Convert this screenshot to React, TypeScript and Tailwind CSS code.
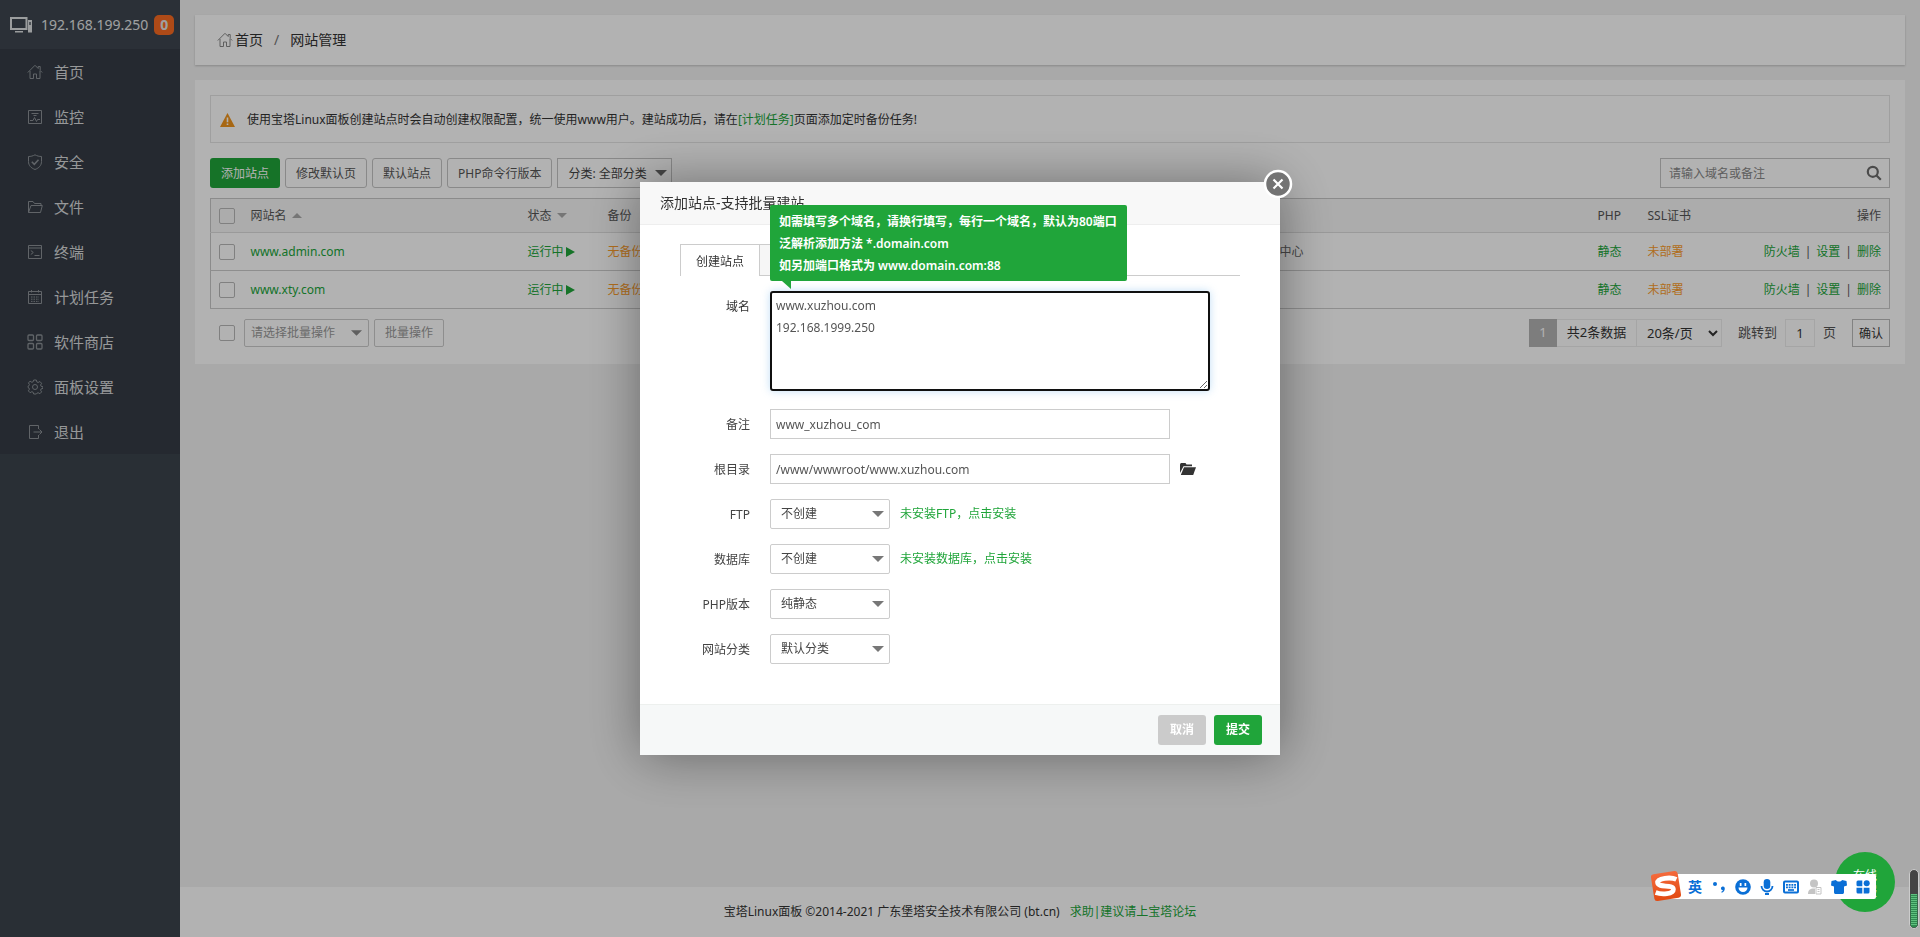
import React from 'react';

const MENU = [
  { label: '首页', icon: 'home' },
  { label: '监控', icon: 'monitor' },
  { label: '安全', icon: 'shield' },
  { label: '文件', icon: 'folder' },
  { label: '终端', icon: 'terminal' },
  { label: '计划任务', icon: 'calendar' },
  { label: '软件商店', icon: 'apps' },
  { label: '面板设置', icon: 'gear' },
  { label: '退出', icon: 'exit' },
];

const SITES = [
  { name: 'www.admin.com', note: '中心' },
  { name: 'www.xty.com', note: '' },
];

const ICON_PATHS: Record<string, React.ReactNode> = {
  home: <path d="M.8 8.500 8 1.300l3.200 3.200V2.500h2v4l2 2M3 7v7.500h3.500V10h3v4.500H13V7" />,
  monitor: (
    <>
      <path d="M1.500 1.500h13v13h-13z" />
      <path d="M4.500 4.500h7M6.500 6.500h3M3 11.500h3l1.500-3 2 4 1-2H13" />
    </>
  ),
  shield: (
    <>
      <path d="M8 .8c2 1.200 4.300 1.700 6.500 1.700v5c0 4-2.500 6.500-6.500 8-4-1.500-6.500-4-6.500-8v-5C3.700 2.500 6 2 8 .8z" />
      <path d="m4.800 7.800 2.500 2.500 4.200-4.500" strokeWidth={1.5} />
    </>
  ),
  folder: <path d="M1.500 13.500v-11h4.500l1.500 2h6.500v2M1.500 13.500 4 6.500h11.300L13.500 13.500z" />,
  terminal: (
    <>
      <path d="M1.500 1.500h13v13h-13zM1.500 4h13" />
      <path d="m3.800 6.500 2.500 2-2.500 2M7.500 11.500h5" />
    </>
  ),
  calendar: (
    <>
      <path d="M1.500 2.500h13v12h-13zM1.500 5.500h13M4.500 1v2.500M11.500 1v2.500" />
      <path d="M4 8h8M4 10.200h8M4 12.400h8" strokeDasharray="1.500 1" />
    </>
  ),
  apps: (
    <g strokeWidth={1.3}>
      <rect x="1" y="1" width="5.500" height="5.500" rx="1" />
      <rect x="9.500" y="1" width="5.500" height="5.500" rx="1" />
      <rect x="1" y="9.500" width="5.500" height="5.500" rx="1" />
      <rect x="9.500" y="9.500" width="5.500" height="5.500" rx="1" />
    </g>
  ),
  gear: (
    <>
      <circle cx="8" cy="8" r="2.500" />
      <path d="M6.700 1h2.600l.5 1.900 1.300.6 1.800-1 1.700 1.800-1 1.700.5 1.300 1.900.5v1.600l-1.900.5-.5 1.300 1 1.700-1.700 1.800-1.800-1-1.300.6L9.300 15H6.700l-.5-1.700-1.300-.6-1.800 1-1.700-1.800 1-1.700-.5-1.300L1 8.400V7.300l.9-.5.5-1.300-1-1.700 1.700-1.500 1.800 1 1.300-.6z" strokeLinejoin="round" />
    </>
  ),
  exit: <path d="M11.500 5V1.500h-9v13h9V11M6.500 8h8M12.500 5.500 15 8l-2.500 2.500" />,
};

const Icon = ({ name, className }: { name: string; className?: string }) => (
  <svg className={className} viewBox="0 0 16 16" fill="none" stroke="currentColor" strokeWidth={1}>
    {ICON_PATHS[name]}
  </svg>
);

const Caret = ({ className = '' }: { className?: string }) => (
  <svg className={className} viewBox="0 0 12 6" fill="currentColor">
    <path d="M0 0h12L6 6z" />
  </svg>
);

const Checkbox = ({ label }: { label: string }) => (
  <input
    type="checkbox"
    aria-label={label}
    className="block size-4 shrink-0 appearance-none rounded-xs border border-[#b8b8b8]"
  />
);

const Sidebar = () => (
  <aside className="w-[180px] shrink-0 bg-[#3c444d]">
    <div className="flex h-[49px] items-center bg-[#3e464f] pl-2.5 text-sm text-[#e4e6e8]">
      <svg className="mr-2 h-4 w-[23px]" viewBox="0 0 23 16" fill="none">
        <path d="M1 1h15.500v11H1z" stroke="#dfe1e3" strokeWidth="2" />
        <path d="M5 14h8v1.500H5zM18 3h4v12.500h-4z" fill="#dfe1e3" />
        <path d="M19 5h2v3h-2z" fill="#737a82" />
      </svg>
      <span>192.168.199.250</span>
      <span className="ml-1.5 flex h-5 w-5 items-center justify-center rounded-[5px] bg-[#fa6b22] font-bold">0</span>
    </div>
    <nav className="bg-[#353c45]">
      {MENU.map((item) => (
        <a key={item.label} href="#" className="flex h-[45px] items-center pl-[27px] text-[15px] text-[#d8dadc]">
          <Icon name={item.icon} className="mr-[11px] size-4 text-[#8b9096]" />
          {item.label}
        </a>
      ))}
    </nav>
  </aside>
);

const Toolbar = () => (
  <div className="mt-[15px] flex items-center gap-[5px]">
    <button className="h-[30px] rounded-[3px] bg-[#20a53a] px-[11px] pt-px text-white">添加站点</button>
    <button className="h-[30px] rounded-[3px] border border-[#c4c4c4] px-2.5 pt-px text-[#555]">修改默认页</button>
    <button className="h-[30px] rounded-[3px] border border-[#c4c4c4] px-2.5 pt-px text-[#555]">默认站点</button>
    <button className="h-[30px] rounded-[3px] border border-[#c4c4c4] px-2.5 pt-px text-[#555]">PHP命令行版本</button>
    <div className="relative">
      <select aria-label="分类" className="h-[30px] w-[115px] appearance-none border border-[#c4c4c4] pt-px pl-2.5 text-[#444]">
        <option>分类: 全部分类</option>
      </select>
      <Caret className="pointer-events-none absolute top-3 right-[5px] h-1.5 w-3 text-[#666]" />
    </div>
    <div className="relative ml-auto">
      <input
        type="text"
        aria-label="搜索"
        placeholder="请输入域名或备注"
        className="block h-[30px] w-[230px] border border-[#c4c4c4] px-2 placeholder:text-[#888]"
      />
      <svg className="absolute top-[7px] right-2 size-4" viewBox="0 0 16 16" fill="none" stroke="#6c6c6c" strokeWidth="2.200">
        <circle cx="6.800" cy="6.800" r="5" />
        <path d="m10.500 10.500 4.300 4.300" />
      </svg>
    </div>
  </div>
);

const SiteTable = () => (
  <table className="mt-2.5 w-full table-fixed border-collapse border border-[#c8c8c8] text-left">
    <colgroup>
      <col className="w-8" />
      <col className="w-[277px]" />
      <col className="w-20" />
      <col className="w-20" />
      <col />
      <col className="w-[318px]" />
      <col className="w-[50px]" />
      <col className="w-[110px]" />
      <col className="w-[140px]" />
    </colgroup>
    <thead>
      <tr className="h-[34px] border-b border-[#ddd] bg-[#f6f6f6] text-[#555] *:px-2 *:font-normal">
        <th><Checkbox label="全选" /></th>
        <th>
          <span className="flex items-center gap-[5px]">网站名<Caret className="h-[5px] w-2.5 rotate-180 text-[#aaa]" /></span>
        </th>
        <th>
          <span className="flex items-center gap-[5px]">状态<Caret className="h-[5px] w-2.5 text-[#aaa]" /></span>
        </th>
        <th>备份</th>
        <th></th>
        <th></th>
        <th>PHP</th>
        <th>SSL证书</th>
        <th className="text-right">操作</th>
      </tr>
    </thead>
    <tbody>
      {SITES.map((site) => (
        <tr key={site.name} className="h-[38px] border-b border-[#ccc] text-[#20a53a] *:px-2">
          <td><Checkbox label={site.name} /></td>
          <td><a href="#">{site.name}</a></td>
          <td>
            <a href="#" className="flex items-center gap-0.5">
              运行中
              <svg className="h-2.5 w-[9px]" viewBox="0 0 9 10" fill="currentColor"><path d="M0 0l9 5-9 5z" /></svg>
            </a>
          </td>
          <td><a href="#" className="text-[#fc9d2b]">无备份</a></td>
          <td></td>
          <td className="text-[#666]">{site.note}</td>
          <td><a href="#">静态</a></td>
          <td><a href="#" className="text-[#fc9d2b]">未部署</a></td>
          <td className="text-right whitespace-nowrap">
            <a href="#">防火墙</a>
            <span className="mx-[5px] text-[#555]">|</span>
            <a href="#">设置</a>
            <span className="mx-[5px] text-[#555]">|</span>
            <a href="#">删除</a>
          </td>
        </tr>
      ))}
    </tbody>
  </table>
);

const Pagination = () => (
  <div className="mt-2.5 flex h-7 items-center">
    <div className="mr-[9px] pl-[9px]"><Checkbox label="批量选择" /></div>
    <div className="relative">
      <select aria-label="批量操作" className="block h-7 w-[125px] appearance-none rounded-xs border border-[#ccc] pl-1.5 text-[#999]">
        <option>请选择批量操作</option>
      </select>
      <Caret className="pointer-events-none absolute top-[11px] right-[7px] h-1.5 w-[11px] text-[#888]" />
    </div>
    <button className="ml-[5px] h-7 rounded-xs border border-[#ccc] px-2.5 text-[#999]">批量操作</button>

    <div className="ml-auto flex items-center text-[13px] text-[#333]">
      <span className="flex h-7 w-7 items-center justify-center bg-[#b4b4b4] text-white">1</span>
      <span className="flex h-7 w-20 items-center justify-center border border-l-0 border-[#ececec]">共2条数据</span>
      <select aria-label="每页条数" className="h-7 w-[85px] border border-l-0 border-[#ececec] pl-1.5">
        <option>20条/页</option>
      </select>
      <label htmlFor="page" className="mr-2 ml-4 text-[#555]">跳转到</label>
      <input id="page" type="text" defaultValue="1" className="h-7 w-[30px] border border-[#ececec] text-center" />
      <span className="mr-4 ml-2 text-[#555]">页</span>
      <button className="h-7 w-[38px] border border-[#bbb] pt-0.5 text-xs">确认</button>
    </div>
  </div>
);

const FormRow = ({ id, label, children }: { id: string; label: string; children: React.ReactNode }) => (
  <div className="mt-[15px] flex h-[30px]">
    <label htmlFor={id} className="w-[110px] pr-5 text-right leading-8">{label}</label>
    <div className="flex items-center">{children}</div>
  </div>
);

const FormSelect = ({ id, value }: { id: string; value: string }) => (
  <div className="relative">
    <select id={id} className="block h-[30px] w-[120px] appearance-none rounded-xs border border-[#ccc] pl-2.5">
      <option>{value}</option>
    </select>
    <Caret className="pointer-events-none absolute top-3 right-1.5 h-1.5 w-3 text-[#777]" />
  </div>
);

const AddSiteDialog = () => (
  <div className="fixed inset-0 z-10 flex items-center justify-center bg-black/30">
    <div role="dialog" aria-label="添加站点" className="relative w-[640px] bg-white text-[#333] shadow-[1px_1px_50px_rgba(0,0,0,0.4)]">
      <h2 className="flex h-[43px] items-center border-b border-[#eee] bg-[#f8f8f8] pl-5 text-sm">添加站点-支持批量建站</h2>
      <button aria-label="关闭" className="absolute -top-[13px] -right-[13px] rounded-full">
        <svg className="size-[30px]" viewBox="0 0 30 30" fill="none" stroke="#fff">
          <circle cx="15" cy="15" r="13" fill="#737373" strokeWidth="2.500" />
          <path d="m10.500 10.500 9 9M19.500 10.500l-9 9" strokeWidth="2.200" />
        </svg>
      </button>

      <form className="h-[479px] px-10 pt-[19px]">
        <div className="flex h-8 border-b border-[#ccc]">
          <button type="button" className="-mb-px w-20 border border-b-0 border-[#ccc] bg-white pt-0.5">创建站点</button>
          <button type="button" aria-label="批量创建" className="-mb-px w-20 border border-l-0 border-[#ccc] bg-[#f6f6f6]"></button>
        </div>

        <div className="relative mt-[15px] flex">
          <label htmlFor="domain" className="w-[90px] pr-5 text-right leading-8">域名</label>
          <textarea
            id="domain"
            defaultValue={'www.xuzhou.com\n192.168.1999.250'}
            className="block h-[100px] w-[440px] rounded-[3px] border-2 border-[#101010] px-1 py-0.5 leading-[22px] text-[#555] shadow-[0_0_8px_rgba(102,175,233,0.4)] outline-none"
          />
          <div className="absolute bottom-[110px] left-[90px] rounded-xs bg-[#20a53a] pt-1.5 pr-2.5 pb-1 pl-[9px] leading-[22px] font-semibold whitespace-nowrap text-white">
            如需填写多个域名，请换行填写，每行一个域名，默认为80端口
            <br />
            泛解析添加方法 *.domain.com
            <br />
            如另加端口格式为 www.domain.com:88
            <svg className="absolute top-full left-3 h-2 w-[9px]" viewBox="0 0 9 8" fill="#20a53a"><path d="M0 0h9v8z" /></svg>
          </div>
        </div>

        <div className="-ml-5 pt-[3px] text-[#444]">
          <FormRow id="note" label="备注">
            <input id="note" type="text" defaultValue="www_xuzhou_com" className="h-[30px] w-[400px] border border-[#ccc] px-[5px] text-[#555]" />
          </FormRow>
          <FormRow id="path" label="根目录">
            <input id="path" type="text" defaultValue="/www/wwwroot/www.xuzhou.com" className="h-[30px] w-[400px] border border-[#ccc] px-[5px] text-[#555]" />
            <button type="button" aria-label="选择目录" className="ml-2.5">
              <svg className="h-3 w-4" viewBox="0 0 16 12" fill="#333">
                <path d="M0 10V1.500L.8 0h4.700l1 1.500H12V3.200H3.500z" />
                <path d="M4 4.200h12L13.200 12H.8z" />
              </svg>
            </button>
          </FormRow>
          <FormRow id="ftp" label="FTP">
            <FormSelect id="ftp" value="不创建" />
            <a href="#" className="ml-2.5 text-[#20a53a]">未安装FTP，点击安装</a>
          </FormRow>
          <FormRow id="db" label="数据库">
            <FormSelect id="db" value="不创建" />
            <a href="#" className="ml-2.5 text-[#20a53a]">未安装数据库，点击安装</a>
          </FormRow>
          <FormRow id="php" label="PHP版本">
            <FormSelect id="php" value="纯静态" />
          </FormRow>
          <FormRow id="type" label="网站分类">
            <FormSelect id="type" value="默认分类" />
          </FormRow>
        </div>
      </form>

      <div className="flex h-[51px] items-center justify-end gap-2 border-t border-[#edf0ee] bg-[#f6f8f8] pr-[18px] font-bold text-white">
        <button className="h-[30px] w-12 rounded-[3px] bg-[#cbcbcb]">取消</button>
        <button className="h-[30px] w-12 rounded-[3px] bg-[#20a53a]">提交</button>
      </div>
    </div>
  </div>
);

const InputMethodBar = () => (
  <div className="fixed right-11 bottom-[38px] z-30 flex h-[25px] w-[214px] items-center rounded-xs bg-white pl-[21px] text-[#0a6fd6]">
    <svg className="absolute -top-1 -left-3 size-8" viewBox="0 0 32 32">
      <defs>
        <linearGradient id="logo" x1="0" y1="0" x2="0" y2="1">
          <stop offset="0" stopColor="#f46a3c" />
          <stop offset="1" stopColor="#e24a12" />
        </linearGradient>
      </defs>
      <rect x="2.500" y="2.500" width="27" height="27" rx="3" fill="url(#logo)" transform="rotate(-9 16 16)" />
      <path d="M27 10.500C22 7.500 8 7 8 12c0 5.500 15.500 2.500 15 8-.5 5-12 4.500-18 1.500" fill="none" stroke="#fff" strokeWidth="4.800" transform="rotate(-6 16 16)" />
    </svg>
    <div className="flex w-full *:flex *:w-6 *:items-center *:justify-center">
      <span className="text-sm leading-6 font-bold">英</span>
      <span>
        <svg className="size-4" viewBox="0 0 16 16" fill="currentColor">
          <circle cx="4" cy="5" r="2" />
          <path d="M11.500 7.500a2 2 0 0 1 2.300 2c0 2-1.300 3.800-3.300 4.300v-1.200c.9-.3 1.400-.8 1.500-1.500a1.800 1.800 0 0 1-.5-3.600z" />
        </svg>
      </span>
      <span>
        <svg className="size-4" viewBox="0 0 16 16">
          <circle cx="8" cy="8" r="7.800" fill="currentColor" />
          <path d="M4.800 4h1.700v3H4.800zM9.500 4h1.700v3H9.500zM3.500 8.500h9a4.500 4.500 0 0 1-9 0z" fill="#fff" />
        </svg>
      </span>
      <span>
        <svg className="size-4" viewBox="0 0 16 16" fill="none" stroke="currentColor" strokeWidth="1.800">
          <rect x="4.700" y="0" width="6.600" height="10" rx="3.300" fill="currentColor" stroke="none" />
          <path d="M2.500 7a5.500 5.500 0 0 0 11 0M6 15h4" />
        </svg>
      </span>
      <span>
        <svg className="size-4" viewBox="0 0 16 16" fill="none" stroke="currentColor">
          <rect x="1" y="2.500" width="14" height="11" rx="1" strokeWidth="2" />
          <path d="M3 5.800h10.500M3 8.300h10.500" strokeWidth="1.700" strokeDasharray="1.900 .8" />
          <path d="M5 11h6" strokeWidth="1.700" />
        </svg>
      </span>
      <span>
        <svg className="size-4" viewBox="0 0 16 16" fill="#c4c4c4">
          <circle cx="7" cy="4.500" r="4" />
          <path d="M1 15c0-4 2-5.500 6-5.500h1V15z" />
          <path d="M9 8.500h5v6.500H9zM10.500 10.500h2M10.500 12.500h2" stroke="#c4c4c4" fill="#fff" />
        </svg>
      </span>
      <span>
        <svg className="size-4" viewBox="0 0 16 16" fill="currentColor">
          <path d="M.5 2 5 1c1 2 5 2 6 0l4.500 1 .5 4.500-3 1V13c0 1.500-.5 2-2 2H5c-1.500 0-2-.5-2-2V7.500l-3-1z" />
        </svg>
      </span>
      <span>
        <svg className="size-4" viewBox="0 0 16 16" fill="currentColor">
          <path d="M3 1.500h4.300v5.800H3A1.500 1.500 0 0 1 1.500 5.700V3A1.500 1.500 0 0 1 3 1.500zM1.500 8.700h5.800v5.800H3A1.500 1.500 0 0 1 1.500 13zM8.700 8.700h5.800V13a1.500 1.500 0 0 1-1.500 1.500H8.700z" />
          <circle cx="11.700" cy="4.300" r="3" />
        </svg>
      </span>
    </div>
  </div>
);

const FloatingWidgets = () => (
  <>
    <button className="fixed right-[25px] bottom-[25px] z-20 size-[60px] rounded-full bg-[#20a53a] px-[18px] pt-1 text-xs leading-4 text-white">
      在线客服
    </button>
    <InputMethodBar />
    <svg className="fixed right-px bottom-2 z-20 h-[60px] w-2.5" viewBox="0 0 10 60">
      <rect x=".5" y=".5" width="9" height="59" rx="4.500" fill="#444" stroke="#ccc" />
      <path d="M1.500 25h7v30a3.500 3.500 0 0 1-7 0z" fill="#2f8a50" />
      <path d="M5 25v31" stroke="#5fc07e" strokeWidth="6" strokeDasharray="1 1" />
    </svg>
  </>
);

export default function App() {
  return (
    <div className="flex min-h-screen bg-[#f2f2f2] font-['Noto_Sans','Noto_Sans_CJK_SC',sans-serif] text-xs text-[#333]">
      <Sidebar />
      <div className="flex min-w-0 flex-1 flex-col">
        <main className="flex flex-col gap-[15px] p-[15px]">
          <div className="flex h-[50px] items-center bg-white pl-[22px] text-sm shadow-[0_1px_2px_rgba(0,0,0,0.2)]">
            <Icon name="home" className="mr-0.5 size-4 text-[#888]" />
            <a href="#">首页</a>
            <span className="mx-[11px] text-[#777]">/</span>
            <span>网站管理</span>
          </div>

          <section className="bg-white px-[15px] pt-[15px] pb-[17px]">
            <div className="flex h-12 items-center border border-[#e4e4e4] pt-px pl-[9px]">
              <svg className="mr-3 h-3.5 w-[15px]" viewBox="0 0 15 14">
                <path d="M7.500 0 15 14H0z" fill="#f0941c" strokeLinejoin="round" />
                <path d="M6.700 4.500h1.600v4.800H6.700zM6.700 10.500h1.600V12H6.700z" fill="#fff" />
              </svg>
              <p>
                使用宝塔Linux面板创建站点时会自动创建权限配置，统一使用www用户。建站成功后，请在
                <a href="#" className="text-[#20a53a]">[计划任务]</a>
                页面添加定时备份任务!
              </p>
            </div>
            <Toolbar />
            <SiteTable />
            <Pagination />
          </section>
        </main>

        {/* the copyright line is centred on the window, not on the content column */}
        <footer className="mt-auto flex h-[50px] items-center justify-center gap-2.5 bg-white pr-[180px]">
          <span>宝塔Linux面板 ©2014-2021 广东堡塔安全技术有限公司 (bt.cn)</span>
          <a href="#" className="text-[#20a53a]">求助|建议请上宝塔论坛</a>
        </footer>
      </div>
      <AddSiteDialog />
      <FloatingWidgets />
    </div>
  );
}
